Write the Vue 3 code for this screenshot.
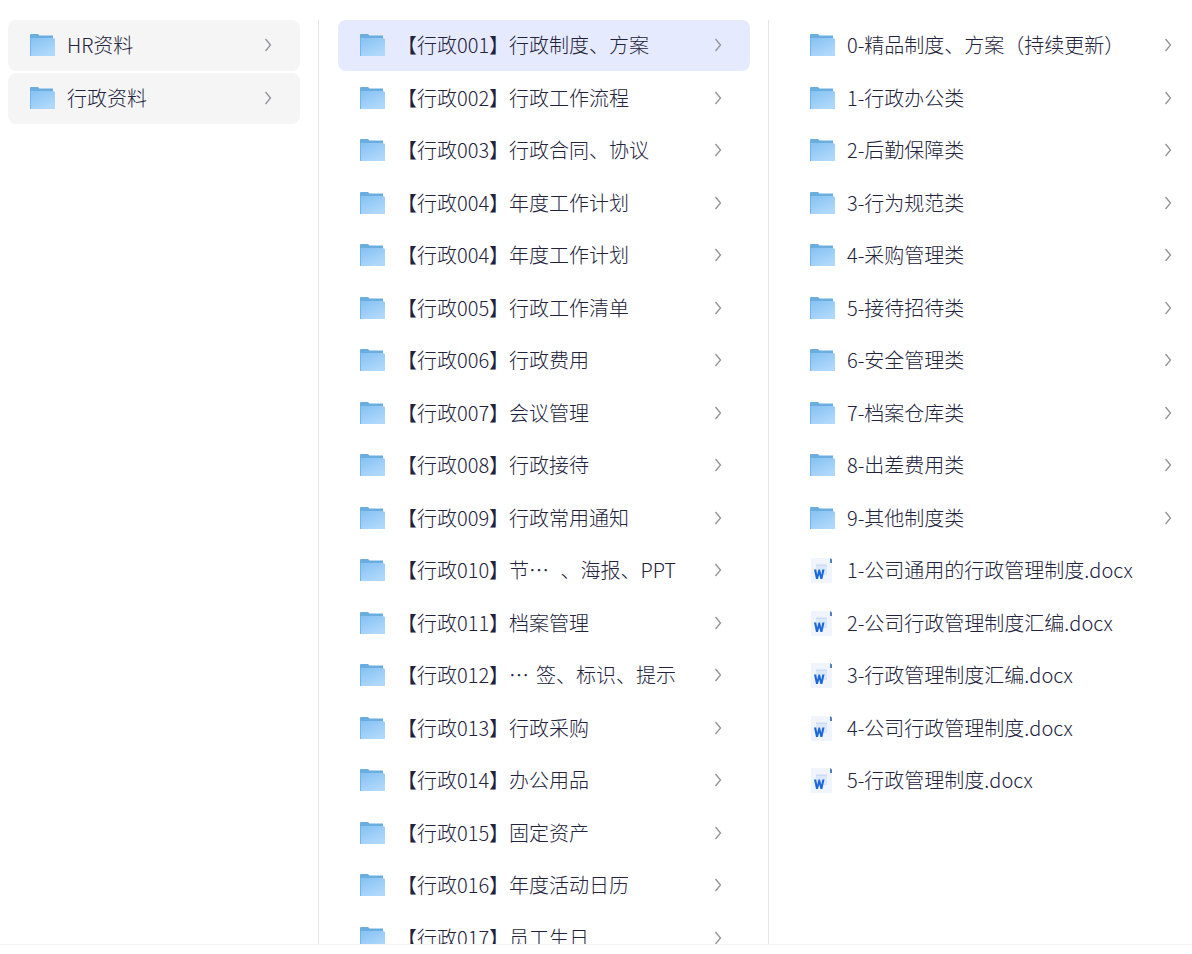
<template>
  <main class="file-browser">
    <nav v-for="col in columns" :key="col.id" class="column" :class="col.id" :aria-label="col.label">
      <ul class="list">
        <li v-for="(item, i) in col.items" :key="i" class="list-item">
          <component
            :is="item.file ? 'a' : 'button'"
            class="row"
            :class="{ opened: col.id === 'root', active: col.active === i }"
            :href="item.file ? '#' : null"
            :type="item.file ? null : 'button'"
            @click="selectItem(col, item, i)"
          >
            <!-- Word 文档 -->
            <svg v-if="item.file" class="icon" viewBox="0 0 26 26" aria-hidden="true">
              <path d="M2 1h19v5h2v20H2z" fill="#eff4fd" />
              <path d="M7 7h11v11H7z" fill="#dbe8fa" />
              <path d="M7 8.500h11" stroke="#cbdcf5" fill="none" />
              <path d="M21 1l2 1.500V6h-2z" fill="#4f7fc6" />
              <path d="M5 12.500h2.200l1 5.200 1.300-5.200h1.500l1.300 5.200 1-5.200h2.200l-2.100 9.500h-2l-1.200-4.600L9 22H7z" fill="#1c68d8" />
            </svg>
            <!-- 文件夹 -->
            <svg v-else class="icon" viewBox="0 0 26 26" aria-hidden="true">
              <path d="M1 3q0-1 1-1h7l1.500 1.500H24V9H1z" fill="#6aaee0" />
              <path d="M1 6.500l1-.5h22l2 1v17H1z" fill="url(#folderFill)" />
              <path d="M1.500 6v18" stroke="#74b4ea" fill="none" />
            </svg>

            <span class="name" :class="{ split: item.tail }">
              <span>{{ item.name }}</span>
              <span v-if="item.tail">{{ item.tail }}</span>
            </span>

            <svg v-if="!item.file" class="arrow" viewBox="0 0 8 14" aria-hidden="true">
              <path d="M1.500 1l5 6-5 6" fill="none" stroke="#929296" stroke-width="1.300" />
            </svg>
          </component>
        </li>
      </ul>
    </nav>

    <svg class="defs" aria-hidden="true">
      <defs>
        <linearGradient id="folderFill" x1="0" y1="0" x2="0.6" y2="1">
          <stop offset="0" stop-color="#84c1f2" />
          <stop offset="1" stop-color="#b0d8fb" />
        </linearGradient>
      </defs>
    </svg>
  </main>
</template>

<script setup>
import { ref } from 'vue'

const columns = ref([
  {
    id: 'root',
    label: '资料库',
    active: -1,
    items: [{ name: 'HR资料' }, { name: '行政资料' }],
  },
  {
    id: 'category',
    label: '行政资料',
    active: 0,
    items: [
      { name: '【行政001】行政制度、方案' },
      { name: '【行政002】行政工作流程' },
      { name: '【行政003】行政合同、协议' },
      { name: '【行政004】年度工作计划' },
      { name: '【行政004】年度工作计划' },
      { name: '【行政005】行政工作清单' },
      { name: '【行政006】行政费用' },
      { name: '【行政007】会议管理' },
      { name: '【行政008】行政接待' },
      { name: '【行政009】行政常用通知' },
      { name: '【行政010】节…', tail: '、海报、PPT' },
      { name: '【行政011】档案管理' },
      { name: '【行政012】…', tail: '签、标识、提示' },
      { name: '【行政013】行政采购' },
      { name: '【行政014】办公用品' },
      { name: '【行政015】固定资产' },
      { name: '【行政016】年度活动日历' },
      { name: '【行政017】员工生日' },
    ],
  },
  {
    id: 'content',
    label: '行政制度、方案',
    active: -1,
    items: [
      { name: '0-精品制度、方案（持续更新）' },
      { name: '1-行政办公类' },
      { name: '2-后勤保障类' },
      { name: '3-行为规范类' },
      { name: '4-采购管理类' },
      { name: '5-接待招待类' },
      { name: '6-安全管理类' },
      { name: '7-档案仓库类' },
      { name: '8-出差费用类' },
      { name: '9-其他制度类' },
      { name: '1-公司通用的行政管理制度.docx', file: true },
      { name: '2-公司行政管理制度汇编.docx', file: true },
      { name: '3-行政管理制度汇编.docx', file: true },
      { name: '4-公司行政管理制度.docx', file: true },
      { name: '5-行政管理制度.docx', file: true },
    ],
  },
])

function selectItem(col, item, index) {
  if (item.file || col.id === 'root') return
  col.active = index
}
</script>

<style>
body {
  background: #fff;
}
</style>

<style scoped>
.file-browser {
  box-sizing: border-box;
  display: grid;
  grid-template-columns: 319fr 450fr 423fr;
  grid-template-rows: minmax(0, 1fr);
  height: calc(100vh - 9px);
  padding-top: 20px;
  border-bottom: 1px solid #f1f1f3;
  font-family: "Noto Sans CJK SC", "Noto Sans", sans-serif;
  font-size: 20px;
  font-weight: 300;
  color: #22223c;
}

.column {
  min-width: 0;
  padding: 0 18px 0 19px;
  border-right: 1px solid #e6e6e8;
  overflow-x: hidden;
  overflow-y: auto;
  scrollbar-width: none;
}
.column.root { padding-left: 8px; }
.column.content { padding-right: 0; border-right: none; }

.list {
  margin: 0;
  padding: 0;
  list-style: none;
}
.list-item { margin-bottom: 2px; }
.list-item:nth-child(even) { margin-bottom: 1px; }

.row {
  box-sizing: border-box;
  display: flex;
  align-items: center;
  width: 100%;
  height: 51px;
  padding: 0 28px 1px 21px;
  border: none;
  border-radius: 8px;
  background: transparent;
  font: inherit;
  color: inherit;
  text-align: left;
  text-decoration: none;
  cursor: pointer;
}
.row.opened { background: #f5f5f5; }
.row.active { background: #e6eaff; }
.content .row { padding-right: 20px; }

.icon {
  flex: none;
  width: 26px;
  height: 26px;
  margin-right: 12px;
}
.name {
  flex: 1;
  min-width: 0;
  overflow: hidden;
  line-height: 28px;
  white-space: nowrap;
}
.name.split {
  display: flex;
  justify-content: space-between;
  margin-right: 38px;
}
.arrow {
  flex: none;
  width: 8px;
  height: 14px;
}

.defs {
  position: absolute;
  width: 0;
  height: 0;
}
</style>
